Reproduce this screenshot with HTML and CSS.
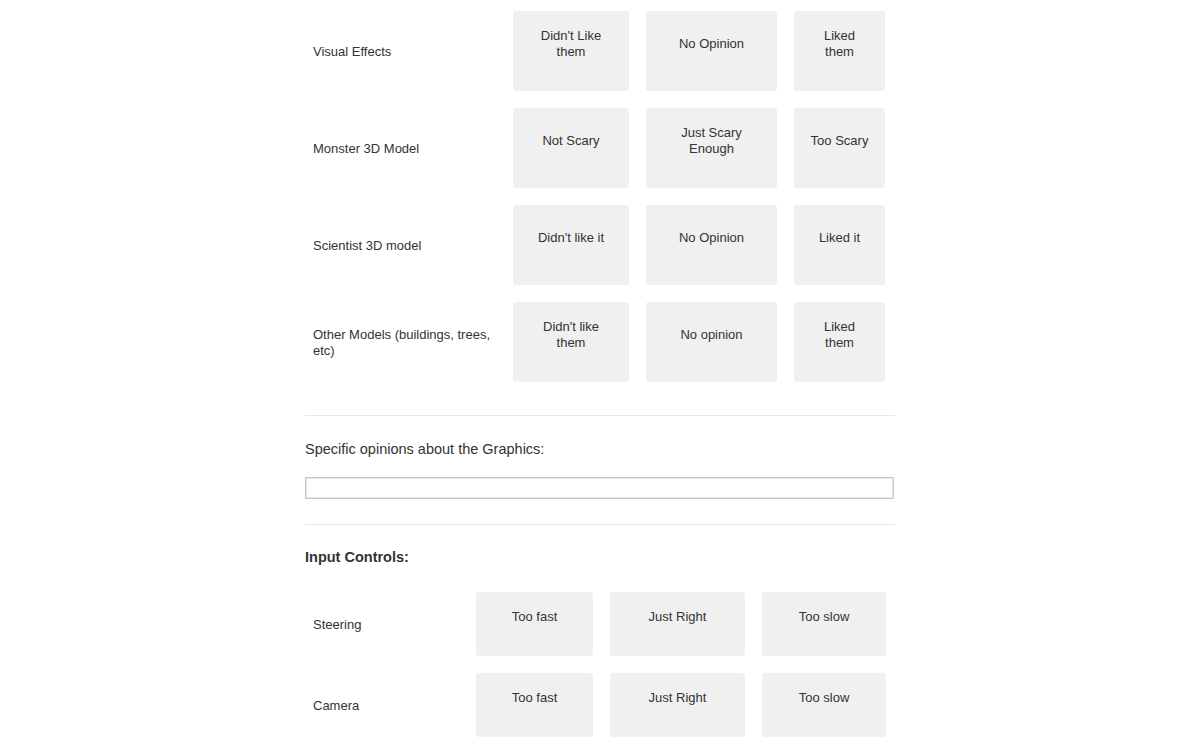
FILE: index.html
```html
<!DOCTYPE html>
<html>
<head>
<meta charset="utf-8">
<link rel="stylesheet" href="styles.css">
</head>
<body>
<div class="page">
  <div class="grid grid-graphics">
    <div class="label">Visual Effects</div>
    <div class="opt">Didn't Like them</div>
    <div class="opt">No Opinion</div>
    <div class="opt">Liked them</div>

    <div class="label">Monster 3D Model</div>
    <div class="opt">Not Scary</div>
    <div class="opt">Just Scary Enough</div>
    <div class="opt">Too Scary</div>

    <div class="label">Scientist 3D model</div>
    <div class="opt">Didn't like it</div>
    <div class="opt">No Opinion</div>
    <div class="opt">Liked it</div>

    <div class="label">Other Models (buildings, trees, etc)</div>
    <div class="opt">Didn't like them</div>
    <div class="opt">No opinion</div>
    <div class="opt">Liked them</div>
  </div>

  <hr class="sep sep-first">

  <div class="question">Specific opinions about the Graphics:</div>
  <input class="text-input" type="text">

  <hr class="sep sep-second">

  <div class="section-title">Input Controls:</div>

  <div class="grid grid-controls">
    <div class="label">Steering</div>
    <div class="opt">Too fast</div>
    <div class="opt">Just Right</div>
    <div class="opt">Too slow</div>

    <div class="label">Camera</div>
    <div class="opt">Too fast</div>
    <div class="opt">Just Right</div>
    <div class="opt">Too slow</div>
  </div>
</div>
</body>
</html>
```

FILE: styles.css
```css
html, body {
  margin: 0;
  padding: 0;
  background: #ffffff;
}

body {
  font-family: "Liberation Sans", Arial, sans-serif;
  color: #333333;
  font-size: 13px;
}

.page {
  width: 590px;
  margin: 0 auto;
  padding-top: 11px;
}

.grid {
  display: grid;
  column-gap: 17px;
  row-gap: 17px;
}

.grid-graphics {
  grid-template-columns: 191px 116px 131px 91px;
  grid-auto-rows: 80px;
}

.grid-controls {
  grid-template-columns: 154px 117px 135px 124px;
  grid-auto-rows: 64px;
  margin-top: 25px;
}

.label {
  display: flex;
  align-items: center;
  padding: 2px 0 0 8px;
  line-height: 16px;
  font-size: 13px;
  color: #333333;
}

.opt {
  display: flex;
  align-items: center;
  justify-content: center;
  text-align: center;
  background: #f0f0f0;
  border-radius: 3px;
  padding: 1px 15px 15px;
  line-height: 16px;
  font-size: 13px;
  color: #333333;
}

.sep {
  border: 0;
  border-top: 1px solid #e8e8e8;
  margin: 0;
}

.sep-first {
  margin-top: 33px;
}

.question {
  margin-top: 23px;
  font-size: 14.5px;
  line-height: 20px;
  color: #333333;
}

.text-input {
  display: block;
  box-sizing: border-box;
  width: 589px;
  height: 22px;
  margin: 18px 0 0;
  border: 1px solid #c8c8c8;
  box-shadow: inset 0 0 0 1px #e6e6e6;
  background: #ffffff;
  padding: 0 4px;
}

.sep-second {
  margin-top: 25px;
}

.section-title {
  margin-top: 22px;
  font-size: 14.5px;
  line-height: 20px;
  font-weight: bold;
  color: #333333;
}
```
